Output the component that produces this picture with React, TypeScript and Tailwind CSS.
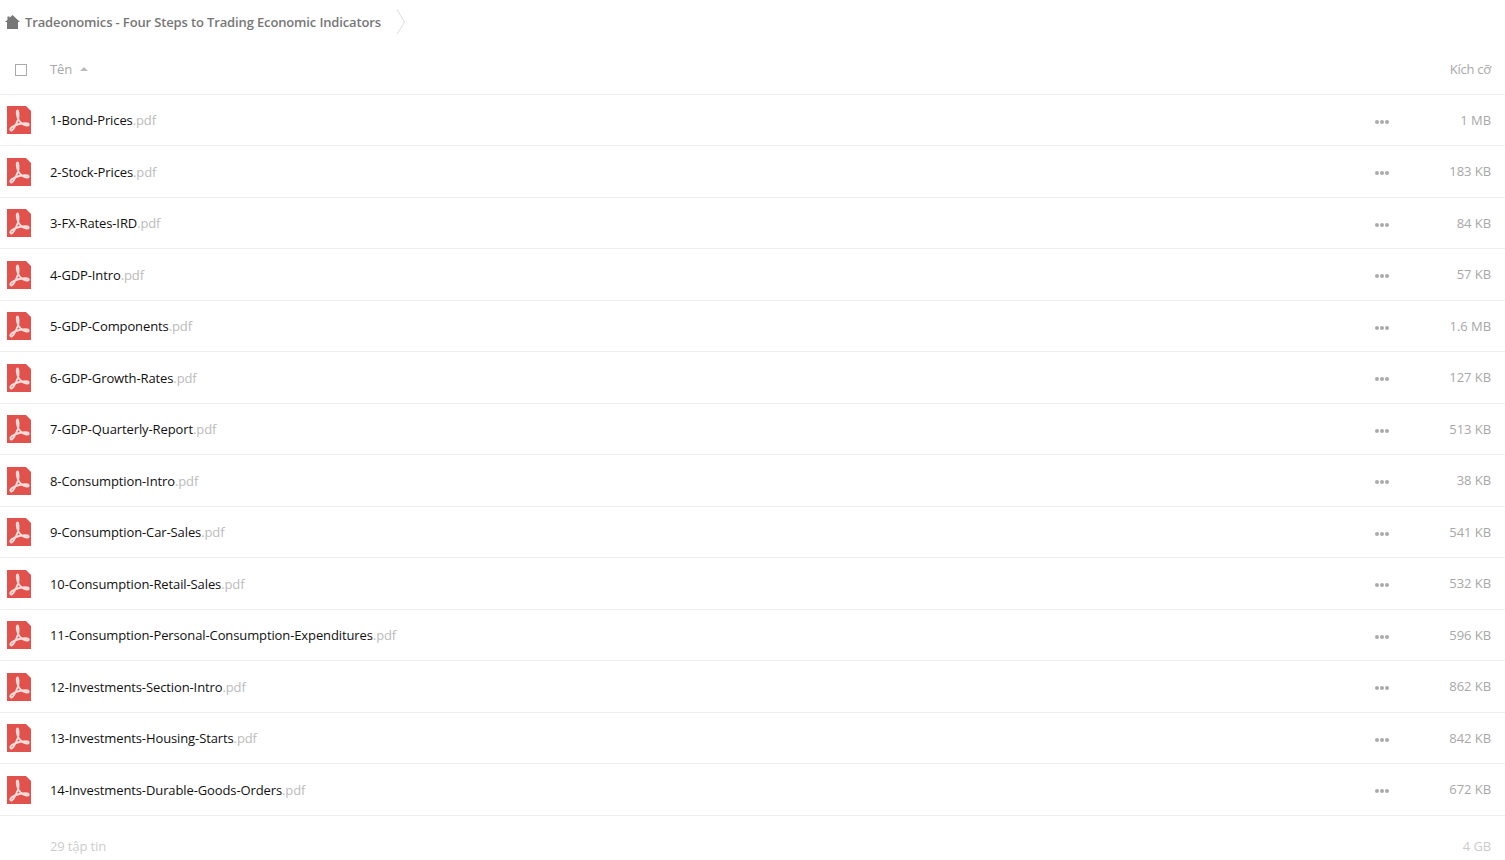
const files = [
  { name: '1-Bond-Prices', size: '1 MB' },
  { name: '2-Stock-Prices', size: '183 KB' },
  { name: '3-FX-Rates-IRD', size: '84 KB' },
  { name: '4-GDP-Intro', size: '57 KB' },
  { name: '5-GDP-Components', size: '1.6 MB' },
  { name: '6-GDP-Growth-Rates', size: '127 KB' },
  { name: '7-GDP-Quarterly-Report', size: '513 KB' },
  { name: '8-Consumption-Intro', size: '38 KB' },
  { name: '9-Consumption-Car-Sales', size: '541 KB' },
  { name: '10-Consumption-Retail-Sales', size: '532 KB' },
  { name: '11-Consumption-Personal-Consumption-Expenditures', size: '596 KB' },
  { name: '12-Investments-Section-Intro', size: '862 KB' },
  { name: '13-Investments-Housing-Starts', size: '842 KB' },
  { name: '14-Investments-Durable-Goods-Orders', size: '672 KB' },
]

function PdfIcon() {
  return (
    <svg width="24" height="28" viewBox="0 0 24 28" className="block">
      <path d="M0 0H19L24 5V28H0Z" fill="#e1524c" />
      <path
        d="M3.5 24C5 26 8 21.5 11 13.5C12 10.5 11.5 4.5 10.5 4.5C9.3 4.5 9.5 10.5 12 14.5C14 17.5 16.5 19 19.5 19.5C22 19.9 22.5 18 20.5 17.5C16.5 16.7 8 18.5 5 21C3.7 22.1 3 23.2 3.5 24Z"
        fill="none"
        stroke="#f7dcda"
        strokeWidth="1.9"
        strokeLinejoin="round"
      />
    </svg>
  )
}

function HomeIcon() {
  return (
    <svg width="15" height="14" viewBox="0 0 15 14" className="block">
      <path d="M7.5 0L15 7H13V14H2V7H0L2.5 4.7V1.5H4.5V2.8Z" fill="#777777" />
    </svg>
  )
}

function Row({ name, size }: { name: string; size: string }) {
  return (
    <div className="flex h-[51.5px] items-center border-b border-[#eeeeee] box-border">
      <div className="w-[50px] shrink-0 pl-[7px]">
        <PdfIcon />
      </div>
      <div className="flex-1 pt-[1.5px] text-[13px] tracking-[-0.11px] text-[#111111]">
        {name}
        <span className="text-[#bbbbbb]">.pdf</span>
      </div>
      <div className="flex w-[14px] justify-between pt-[3px]">
        <span className="size-1 rounded-full bg-[#aaaaaa]"></span>
        <span className="size-1 rounded-full bg-[#aaaaaa]"></span>
        <span className="size-1 rounded-full bg-[#aaaaaa]"></span>
      </div>
      <div className="w-[116px] pr-[14px] pt-[1px] text-right text-[13px] tracking-[-0.05px] text-[#a8a8a8]">{size}</div>
    </div>
  )
}

export default function App() {
  return (
    <div className="h-[860px] overflow-hidden bg-white font-['Open_Sans',sans-serif]">
      <div className="flex h-[44px] items-center pl-[5px]">
        <HomeIcon />
        <span className="ml-[5px] pt-[1px] text-[13px] font-semibold tracking-[-0.14px] text-[#777777]">
          Tradeonomics - Four Steps to Trading Economic Indicators
        </span>
        <svg width="10" height="26" viewBox="0 0 10 26" className="ml-[15px]">
          <path d="M1 0.5L8.5 13L1 25.5" fill="none" stroke="#dddddd" />
        </svg>
      </div>
      <div className="flex h-[50.75px] items-center border-b border-[#eeeeee] box-border pt-[1px]">
        <div className="w-[50px] shrink-0 pl-[15px]">
          <div className="mt-[1px] size-3 border border-[#aaaaaa]"></div>
        </div>
        <span className="text-[13px] tracking-[-0.1px] text-[#a8a8a8]">Tên</span>
        <span className="ml-[8px] h-0 w-0 border-x-4 border-b-4 border-x-transparent border-b-[#bbbbbb]"></span>
        <span className="ml-auto pr-[14px] text-[13px] tracking-[-0.25px] text-[#a8a8a8]">Kích cỡ</span>
      </div>
      {files.map((file) => (
        <Row key={file.name} name={file.name} size={file.size} />
      ))}
      <div className="flex h-[60px] items-center pl-[50px] pr-[14px] pt-[2px] text-[13px] tracking-[-0.13px] text-[#cccccc]">
        <span>29 tập tin</span>
        <span className="ml-auto">4 GB</span>
      </div>
    </div>
  )
}
